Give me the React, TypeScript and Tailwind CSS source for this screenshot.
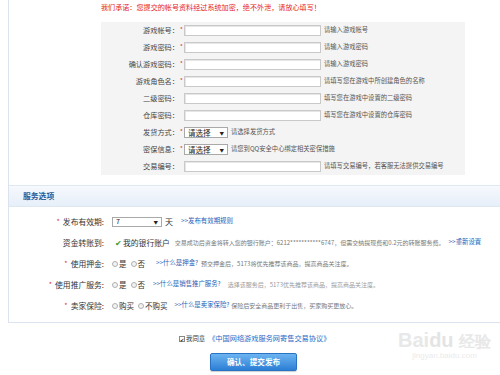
import React from "react";

function Input() {
  return <div className="w-[137px] h-[11px] border border-[#c9c9c9] bg-white shadow-[inset_1px_1px_0_#e6e6e6]" />;
}

function Select({ w, text, big }: { w: number; text: string; big?: boolean }) {
  return (
    <div
      className={`relative h-[11px] border border-[#a9a9a9] bg-white flex items-center ${big ? "text-[7.5px]" : "text-[7.5px]"} text-[#222] pl-[3px]`}
      style={{ width: w }}
    >
      <span className="leading-none">{text}</span>
      <span className="absolute right-[3px] top-1/2 -translate-y-1/2 text-[4.5px] leading-none text-[#222]">▼</span>
    </div>
  );
}

function FormRow({ label, req, children }: { label: string; req?: boolean; children: React.ReactNode }) {
  return (
    <div className="flex h-[17px] items-center">
      <div className="w-[78px] text-right text-[7.2px] leading-none text-[#444]">{label}</div>
      <div className="w-[5px] text-center text-[6px] leading-none text-[#e03030] -mt-[2px]">{req ? "*" : ""}</div>
      {children}
    </div>
  );
}

function Hint({ children, ml = 3 }: { children: React.ReactNode; ml?: number }) {
  return (
    <span className="text-[6.3px] leading-none text-[#555] whitespace-nowrap" style={{ marginLeft: ml }}>
      {children}
    </span>
  );
}

function Radio({ label }: { label: string }) {
  return (
    <span className="flex items-center mr-[4px]">
      <span className="w-[6px] h-[6px] rounded-full border border-[#b0b0b0] bg-[#f2f2f2] mr-[1px]" />
      <span className="text-[7.5px] leading-none text-[#333]">{label}</span>
    </span>
  );
}

function SvcRow({ label, req, children }: { label: string; req?: boolean; children: React.ReactNode }) {
  return (
    <div className="flex h-[21px] items-center">
      <div className="w-[95px] flex justify-end items-center text-[7.8px] leading-none text-[#333]">
        {req && <span className="text-[#e03030] text-[7px] mr-[3px]">*</span>}
        <span>{label}</span>
      </div>
      <div className="ml-[8px] flex items-center whitespace-nowrap">{children}</div>
    </div>
  );
}

function Link({ children, ml = 0 }: { children: React.ReactNode; ml?: number }) {
  return (
    <span className="text-[6.4px] leading-none text-[#1d5fb8] whitespace-nowrap" style={{ marginLeft: ml }}>
      {children}
    </span>
  );
}

function Gray({ children, ml = 0, light }: { children: React.ReactNode; ml?: number; light?: boolean }) {
  return (
    <span
      className={`text-[6px] leading-none whitespace-nowrap ${light ? "text-[#9a9a9a]" : "text-[#777]"}`}
      style={{ marginLeft: ml }}
    >
      {children}
    </span>
  );
}

export default function App() {
  return (
    <div className="relative w-[500px] h-[375px] overflow-hidden bg-white font-['Noto_Sans_CJK_SC','Noto_Sans',sans-serif]">
      <div className="ml-[8px] w-[520px] border-l border-b border-[#dbe4ee]">
        {/* top section */}
        <div className="pl-[92px]">
          <div className="h-[22px] pt-[4px] text-[7.1px] leading-none text-[#e51c1c] whitespace-nowrap">
            我们承诺：您提交的帐号资料经过系统加密，绝不外泄，请放心填写！
          </div>
          <div className="w-[364px] bg-[#f4f4f4]">
            <FormRow label="游戏帐号：" req>
              <Input />
              <Hint>请输入游戏帐号</Hint>
            </FormRow>
            <FormRow label="游戏密码：" req>
              <Input />
              <Hint>请输入游戏密码</Hint>
            </FormRow>
            <FormRow label="确认游戏密码：" req>
              <Input />
              <Hint>请输入游戏密码</Hint>
            </FormRow>
            <FormRow label="游戏角色名：" req>
              <Input />
              <Hint>请填写您在游戏中所创建角色的名称</Hint>
            </FormRow>
            <FormRow label="二级密码：">
              <Input />
              <Hint>填写您在游戏中设置的二级密码</Hint>
            </FormRow>
            <FormRow label="仓库密码：">
              <Input />
              <Hint>填写您在游戏中设置的仓库密码</Hint>
            </FormRow>
            <FormRow label="发货方式：" req>
              <Select w={44} text="请选择" />
              <Hint>请选择发货方式</Hint>
            </FormRow>
            <FormRow label="密保信息：" req>
              <Select w={44} text="请选择" />
              <Hint>请您到QQ安全中心绑定相关密保措施</Hint>
            </FormRow>
            <FormRow label="交易编号：">
              <Input />
              <Hint>请填写交易编号，若客服无法提供交易编号</Hint>
            </FormRow>
          </div>
        </div>

        {/* service section */}
        <div className="mt-[10px] h-[22px] flex items-center pl-[14px] border-t border-b border-[#dde8f3] bg-gradient-to-b from-[#f6f9fd] to-[#e6eff9]">
          <span className="text-[7.8px] leading-none font-bold text-[#2a5a98]">服务选项</span>
        </div>
        <div className="pt-[4px] pb-[6px]">
          <SvcRow label="发布有效期:" req>
            <div className="relative w-[50px] h-[10px] border border-[#a9a9a9] bg-white flex items-center pl-[3px]">
              <span className="text-[7px] leading-none text-[#222]">7</span>
              <span className="absolute right-[3px] top-1/2 -translate-y-1/2 text-[4.5px] leading-none text-[#222]">▼</span>
            </div>
            <span className="ml-[3px] text-[8px] leading-none text-[#333]">天</span>
            <Link ml={8}>&gt;&gt;发布有效期规则</Link>
          </SvcRow>
          <SvcRow label="资金转账到:">
            <span className="ml-[3px] text-[8px] leading-none text-[#3a9a2a]">✔</span>
            <span className="ml-[1px] text-[7.8px] leading-none text-[#333]">我的银行账户</span>
            <Gray ml={5}>交易成功后资金将转入您的银行账户：6212***********6747，但需交纳提现费和0.2元的转账服务费。</Gray>
            <Link ml={4}>&gt;&gt;重新设置</Link>
          </SvcRow>
          <SvcRow label="使用押金:" req>
            <Radio label="是" />
            <Radio label="否" />
            <Link ml={7}>&gt;&gt;什么是押金?</Link>
            <Gray ml={3}>预交押金后，5173将优先推荐该商品，提高商品关注度。</Gray>
          </SvcRow>
          <SvcRow label="使用推广服务:" req>
            <Radio label="是" />
            <Radio label="否" />
            <Link ml={4}>&gt;&gt;什么是销售推广服务?</Link>
            <Gray ml={7} light>选择该服务后，5173优先推荐该商品，提高商品关注度。</Gray>
          </SvcRow>
          <SvcRow label="卖家保险:" req>
            <Radio label="购买" />
            <Radio label="不购买" />
            <Link ml={3}>&gt;&gt;什么是卖家保险?</Link>
            <Gray ml={2}>保险后安全商品更利于出售，买家购买更放心。</Gray>
          </SvcRow>
        </div>
      </div>

      {/* agreement */}
      <div className="mt-[10px] flex items-center pl-[179px] h-[12px]">
        <span className="w-[6px] h-[6px] border border-[#888] bg-white flex items-center justify-center text-[5px] leading-none text-[#222]">✔</span>
        <span className="ml-[1px] text-[6.4px] leading-none text-[#333]">我同意</span>
        <span className="ml-[3px] text-[7.2px] leading-none text-[#1d6ac8] whitespace-nowrap">《中国网络游戏服务网寄售交易协议》</span>
      </div>
      <div className="mt-[8px] pl-[210px]">
        <div className="w-[87px] h-[18px] rounded-[2px] border border-[#2a73c4] bg-gradient-to-b from-[#6cb4f0] to-[#2b7fd6] flex items-center justify-center shadow-[0_1px_1px_rgba(0,0,0,0.2)]">
          <span className="text-[7.6px] leading-none font-bold text-white">确认、提交发布</span>
        </div>
      </div>

      {/* watermark */}
      <div className="absolute left-[398px] top-[330px] flex flex-col items-center pointer-events-none">
        <span className="text-[20px] leading-none font-bold text-[#e8e8e8] font-['Liberation_Sans',sans-serif]">Bai<span className="text-[#e4e4e4]">du</span> <span className="text-[16px]">经验</span></span>
        <span className="text-[8px] leading-none text-[#ebebeb] font-['Liberation_Sans',sans-serif] mt-[2px]">jingyan.baidu.com</span>
      </div>
    </div>
  );
}
